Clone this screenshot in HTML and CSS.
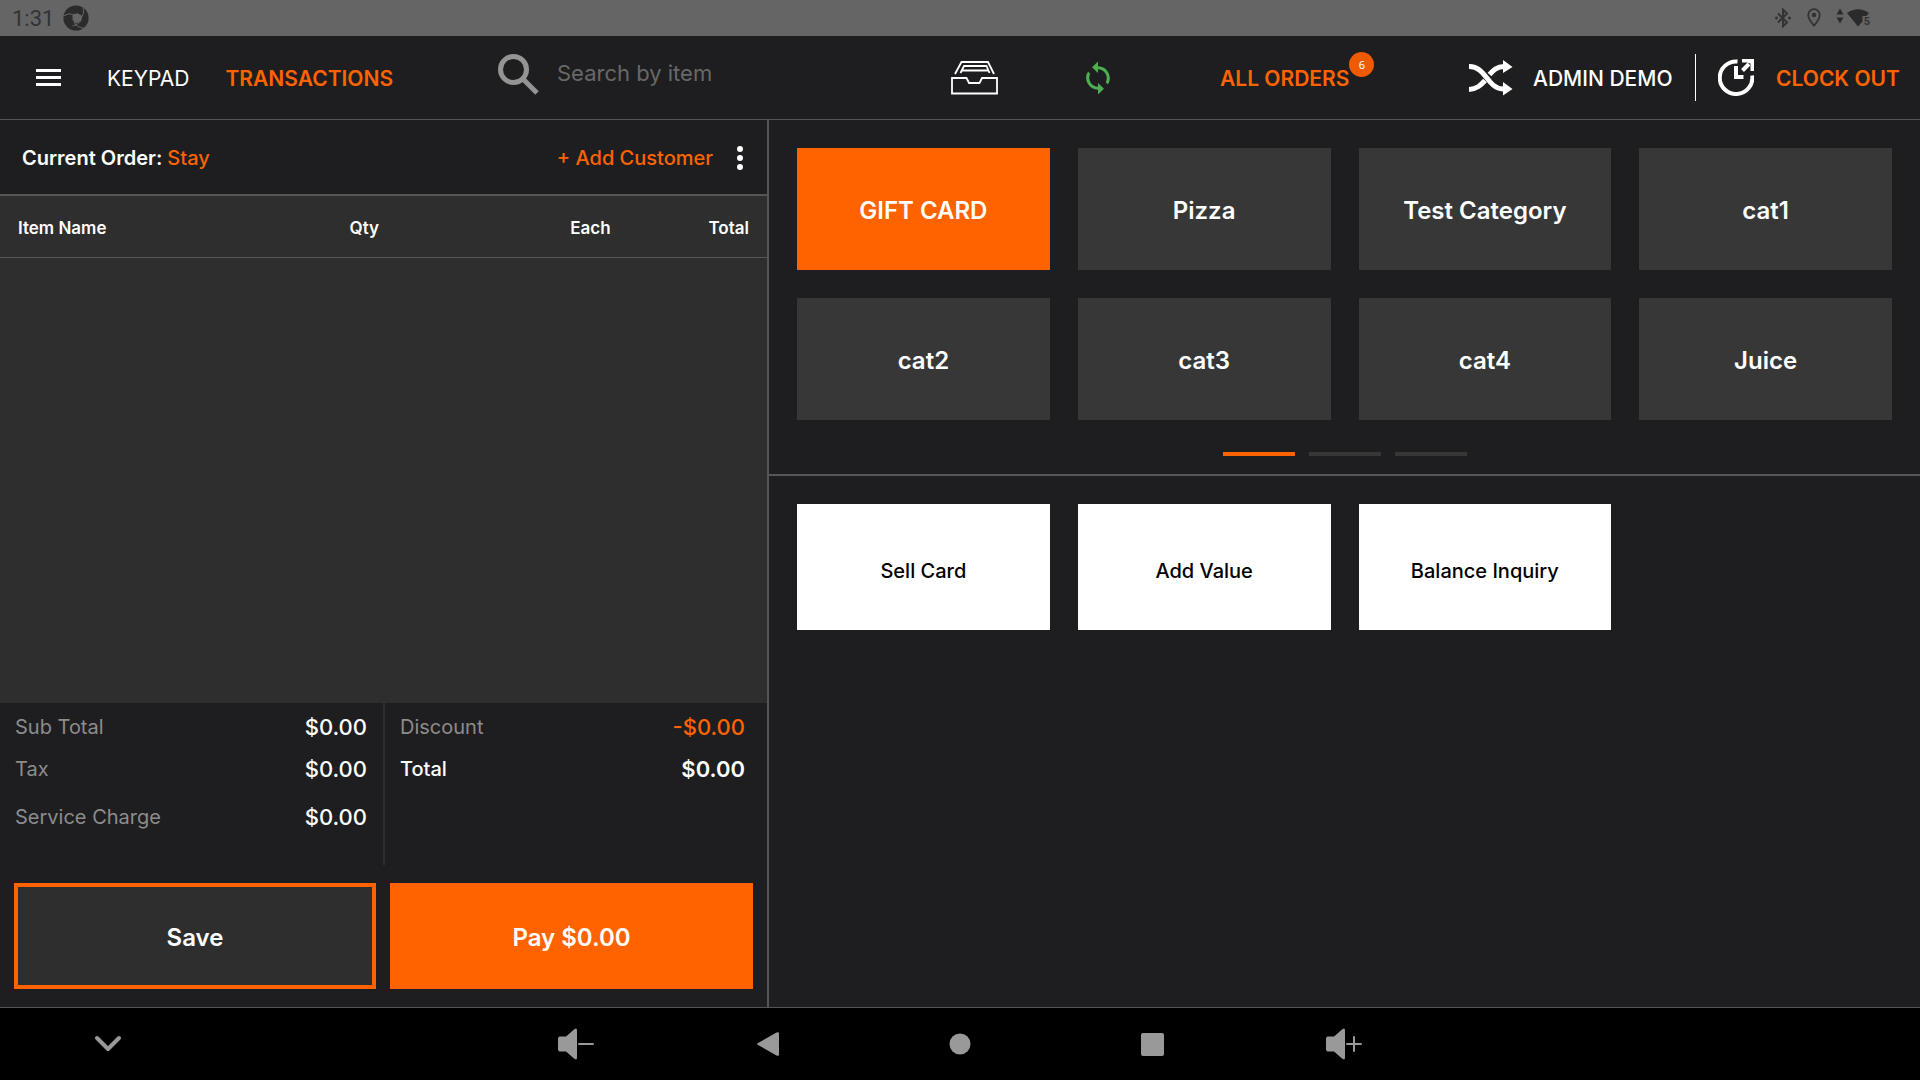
FILE: index.html
```html
<!DOCTYPE html>
<html lang="en">
<head>
<meta charset="utf-8">
<meta name="viewport" content="width=device-width, initial-scale=1">
<title>Register</title>
<link rel="stylesheet" href="styles.css">
</head>
<body>
<div class="status">
  <div class="status-group">
    <time class="clock">1:31</time>
    <svg class="app-mark" width="26" height="26" viewBox="0 0 26 26" aria-hidden="true">
      <circle cx="13" cy="13" r="12.600" fill="#2b2b2b"/>
      <path d="M9.500 9.500 14.500 8.300 19.500 11 18 16 13 18.500 9.500 15z" fill="#656565"/>
      <path d="M.5 11Q5 7.500 10.500 9.500M19 11.500Q22 7 20 2.500M18 15.500Q15.500 20 9.500 21M11 17Q12.500 22 22 23.500" fill="none" stroke="#656565" stroke-width="1"/>
    </svg>
  </div>
  <div class="status-group status-right">
    <svg width="18" height="20" viewBox="0 0 18 20" aria-label="Bluetooth">
      <path d="M4 5.500 13 14.500 9 18.300V1.700L13 5.500 4 14.500" fill="none" stroke="#333" stroke-width="2"/>
      <circle cx="2.500" cy="10" r="1.500" fill="#333"/><circle cx="15.500" cy="10" r="1.500" fill="#333"/>
    </svg>
    <svg width="14" height="20" viewBox="0 0 14 20" aria-label="Location">
      <path d="M7 1.200a5.800 5.800 0 0 0-5.800 5.800C1.200 11 7 17.700 7 17.700S12.800 11 12.800 7A5.800 5.800 0 0 0 7 1.200Z" fill="none" stroke="#333" stroke-width="1.800"/>
      <circle cx="7" cy="7" r="2.300" fill="#333"/>
    </svg>
    <div class="wifi">
      <svg width="34" height="20" viewBox="0 0 34 20" aria-label="Wi-Fi">
        <path d="M.5 6.500 4 .5l3.500 6zM.5 9.500h7L4 15.500zM11 5Q22 -2.500 33 5L30.500 8H26.500V13.500L22 18.500z" fill="#2b2b2b"/>
      </svg>
      <span class="wifi-band">5</span>
    </div>
  </div>
</div>

<header class="topbar">
  <nav class="main-nav">
    <button class="icon-btn" aria-label="Menu">
      <svg width="25" height="17" viewBox="0 0 25 17"><path d="M0 1.500h25M0 8.500h25M0 15.500h25" stroke="#fff" stroke-width="3"/></svg>
    </button>
    <a class="nav-link keypad" href="#">KEYPAD</a>
    <a class="nav-link accent strong" href="#">TRANSACTIONS</a>
  </nav>
  <label class="search">
    <svg width="42" height="42" viewBox="0 0 42 42" aria-hidden="true"><circle cx="15.500" cy="15.500" r="13" fill="none" stroke="#949494" stroke-width="5"/><path d="m25.500 25.500 13.500 13.500" stroke="#949494" stroke-width="5"/></svg>
    <input class="search-input" type="text" placeholder="Search by item" aria-label="Search by item">
  </label>
  <button class="icon-btn" aria-label="Cash drawer">
    <svg width="47" height="34" viewBox="0 0 47 34"><path d="M12 17H1V32.500H46V17H33M4 13 10.500 1H37L43 13M9.500 12 13 5H35.500L38.500 12M10.500 9.500H38M11.500 17H15.500L18 22H28.500L31 17H34" fill="none" stroke="#fff" stroke-width="1.800"/></svg>
  </button>
  <button class="icon-btn" aria-label="Sync">
    <svg width="24" height="34" viewBox="0 0 24 34"><path d="M12 .5v4.700A12 12 0 0 1 22 23.500l-2.200-2.300A9 9 0 0 0 12 8.200V12L6 6.200zM12 33.500v-4.700A12 12 0 0 1 2 10.500l2.200 2.300A9 9 0 0 0 12 25.800V22l6 5.800z" fill="#4caf50"/></svg>
  </button>
  <div class="orders">
    <a class="nav-link accent strong" href="#">ALL ORDERS<span class="badge">6</span></a>
  </div>
  <div class="user">
    <button class="icon-btn" aria-label="Switch user">
      <svg width="44" height="36" viewBox="0 0 44 36"><path d="M0 6.500C17 6 18 28.500 34 29" fill="none" stroke="#fff" stroke-width="5"/><path d="M0 29.500C8 29 12 25 16 20.500M20.500 14.500C24.500 10 28 6.500 35 6.500" fill="none" stroke="#fff" stroke-width="5"/><path d="M34 0 43.500 7 34 13zM34 22 43.500 29 34 35.500z" fill="#fff"/></svg>
    </button>
    <a class="nav-link medium" href="#">ADMIN DEMO</a>
  </div>
  <div class="clock-out">
    <svg width="36" height="37" viewBox="0 0 36 37" aria-hidden="true"><path d="M19.500 2.500A16.300 16.300 0 1 0 34.200 16.500" fill="none" stroke="#fff" stroke-width="4"/><path d="M18 7v11h7.500" fill="none" stroke="#fff" stroke-width="4"/><path d="M24.500 11.500 31 5" fill="none" stroke="#fff" stroke-width="4"/><path d="M24 0h12v12h-3.500V4.500L29 3.500h-5z" fill="#fff"/></svg>
    <a class="nav-link accent strong" href="#">CLOCK OUT</a>
  </div>
</header>

<main class="workspace">
  <section class="order">
    <div class="order-head">
      <h1 class="order-title">Current Order: <span class="accent">Stay</span></h1>
      <button class="add-customer">+ Add Customer</button>
      <button class="icon-btn" aria-label="More options">
        <svg width="6" height="24" viewBox="0 0 6 24"><circle cx="3" cy="3" r="3" fill="#fff"/><circle cx="3" cy="12" r="3" fill="#fff"/><circle cx="3" cy="21" r="3" fill="#fff"/></svg>
      </button>
    </div>
    <div class="items">
      <table class="item-table">
        <thead>
          <tr><th class="col-name">Item Name</th><th class="col-qty">Qty</th><th class="col-each">Each</th><th class="col-total">Total</th></tr>
        </thead>
      </table>
    </div>
    <div class="totals">
      <dl class="sums">
        <dt>Sub Total</dt><dd>$0.00</dd>
        <dt>Tax</dt><dd>$0.00</dd>
        <dt>Service Charge</dt><dd>$0.00</dd>
      </dl>
      <dl class="sums sums-right">
        <dt>Discount</dt><dd class="discount">-$0.00</dd>
        <dt class="grand">Total</dt><dd class="grand-value">$0.00</dd>
      </dl>
    </div>
    <div class="order-actions">
      <button class="action save">Save</button>
      <button class="action pay">Pay $0.00</button>
    </div>
  </section>

  <section class="catalog">
    <div class="categories">
      <div class="tiles">
        <button class="tile selected">GIFT CARD</button>
        <button class="tile">Pizza</button>
        <button class="tile">Test Category</button>
        <button class="tile">cat1</button>
        <button class="tile">cat2</button>
        <button class="tile">cat3</button>
        <button class="tile">cat4</button>
        <button class="tile">Juice</button>
      </div>
      <div class="pager">
        <button class="page current" aria-label="Page 1"></button>
        <button class="page" aria-label="Page 2"></button>
        <button class="page" aria-label="Page 3"></button>
      </div>
    </div>
    <div class="tiles products">
      <button class="product">Sell Card</button>
      <button class="product">Add Value</button>
      <button class="product">Balance Inquiry</button>
    </div>
  </section>
</main>

<footer class="system-nav">
  <button class="icon-btn hide-btn" aria-label="Hide">
    <svg width="28" height="18" viewBox="0 0 28 18"><path d="m3 3 11 11L25 3" fill="none" stroke="#999" stroke-width="4" stroke-linecap="round" stroke-linejoin="round"/></svg>
  </button>
  <button class="icon-btn" aria-label="Volume down">
    <svg width="36" height="32" viewBox="0 0 36 32"><path d="M2 8.500h6L16 1.500q3-2.500 3 1v27q0 3.500-3 1L8 23.500H2q-2 0-2-2v-11q0-2 2-2z" fill="#999"/><path d="M21 16h14" stroke="#999" stroke-width="2" stroke-linecap="round"/></svg>
  </button>
  <button class="icon-btn" aria-label="Back">
    <svg width="22" height="24" viewBox="0 0 22 24"><path d="M1 11 19.500.6Q22 -.5 22 1.500v21q0 2-2.500.9L1 13q-1.500-1 0-2z" fill="#999"/></svg>
  </button>
  <button class="icon-btn" aria-label="Home">
    <svg width="22" height="22" viewBox="0 0 22 22"><circle cx="11" cy="11" r="10.500" fill="#999"/></svg>
  </button>
  <button class="icon-btn" aria-label="Recent apps">
    <svg width="23" height="23" viewBox="0 0 23 23"><rect width="23" height="23" rx="2" fill="#999"/></svg>
  </button>
  <button class="icon-btn" aria-label="Volume up">
    <svg width="36" height="32" viewBox="0 0 36 32"><path d="M2 8.500h6L16 1.500q3-2.500 3 1v27q0 3.500-3 1L8 23.500H2q-2 0-2-2v-11q0-2 2-2z" fill="#999"/><path d="M21 16h14M28 9v14" stroke="#999" stroke-width="2" stroke-linecap="round"/></svg>
  </button>
</footer>
</body>
</html>
```
FILE: styles.css
```css
*, *::before, *::after { box-sizing: border-box; }

body {
  margin: 0;
  min-height: 100vh;
  display: flex;
  flex-direction: column;
  background: #1e1e20;
  color: #fff;
  font-family: Inter, "Liberation Sans", sans-serif;
  font-size: 20px;
  line-height: 28px;
}

button, input { font: inherit; color: inherit; }
button { border: 0; padding: 0; background: none; cursor: pointer; }
svg { display: block; flex: none; }
a { color: inherit; text-decoration: none; }

.accent { color: #ff6300; }
.medium { font-weight: 500; }
.strong { font-weight: 600; }
.icon-btn { display: flex; align-items: center; }

/* Device status bar */
.status {
  display: flex;
  justify-content: space-between;
  height: 36px;
  padding: 0 50px 0 12px;
  background: #656565;
  color: #333;
}
.status-group { display: flex; align-items: center; gap: 9px; }
.status-right { gap: 15px; }
.clock { font-family: Roboto, sans-serif; font-size: 22px; padding-top: 1px; }
.wifi { position: relative; width: 34px; }
.wifi-band {
  position: absolute;
  right: 0;
  bottom: 1px;
  padding-left: 1px;
  background: #656565;
  font-family: Roboto, sans-serif;
  font-size: 11px;
  font-weight: 700;
  line-height: 10px;
}

/* Top bar */
.topbar {
  display: grid;
  grid-template-columns: 498fr 453fr 135fr 134fr 249fr 249fr 202fr;
  align-items: center;
  height: 84px;
  border-bottom: 1px solid #555;
}
.main-nav { display: flex; align-items: center; gap: 36px; padding-left: 36px; }
.nav-link { padding-top: 2px; font-size: 21px; white-space: nowrap; }
.keypad { margin-left: 10px; }
.search { display: flex; align-items: center; gap: 17px; padding-bottom: 6px; }
.search-input {
  flex: 1;
  min-width: 0;
  padding: 0 0 4px;
  border: 0;
  outline: 0;
  background: none;
  font-size: 22px;
}
.search-input::placeholder { color: #686868; opacity: 1; }
.orders { display: flex; }
.orders .nav-link { position: relative; }
.badge {
  position: absolute;
  left: 100%;
  bottom: 16px;
  width: 25px;
  height: 25px;
  border-radius: 50%;
  background: #f05a00;
  color: #fff;
  font-family: "Noto Sans", sans-serif;
  font-size: 11px;
  font-weight: 400;
  line-height: 25px;
  text-align: center;
}
.user { display: flex; align-items: center; gap: 20px; }
.user::after { content: ""; width: 1px; height: 47px; margin: 0 22px 0 auto; background: #fff; }
.clock-out { display: flex; align-items: center; gap: 22px; }

/* Two panes */
.workspace { flex: 1; display: grid; grid-template-columns: 769fr 1151fr; }
.order { display: flex; flex-direction: column; border-right: 2px solid #555; }

.order-head {
  display: flex;
  align-items: center;
  height: 76px;
  padding: 2px 24px 0 22px;
  border-bottom: 2px solid #555;
}
.order-title { flex: 1; margin: 0; font-size: 20px; font-weight: 600; }
.order-title .accent { font-weight: 500; }
.add-customer { margin-right: 24px; color: #ff6300; font-weight: 500; }

.items { flex: 1; background: #2e2e2e; }
.item-table { width: 100%; table-layout: fixed; border-collapse: collapse; }
.item-table th {
  height: 61px;
  padding: 4px 0 0;
  border-bottom: 1px solid #555;
  font-size: 17px;
  font-weight: 600;
}
.item-table .col-name { width: 40%; padding-left: 18px; text-align: left; }
.item-table .col-qty { width: 15%; text-align: center; }
.item-table .col-each { width: 25%; padding-right: 3px; text-align: right; }
.item-table .col-total { width: 20%; padding-right: 18px; text-align: right; }

.totals { display: grid; grid-template-columns: 383fr 384fr; }
.sums {
  display: grid;
  grid-template-columns: 1fr auto;
  grid-template-rows: 48px 36px 60px;
  align-items: center;
  margin: 0;
  padding: 0 16px 18px 15px;
}
.sums dt { color: #8c8c8c; }
.sums dd { margin: 0; font-size: 22px; font-weight: 500; text-align: right; }
.sums-right { padding-right: 22px; border-left: 2px solid #2e2e2e; }
.sums .grand { color: #fff; font-weight: 500; }
.sums .grand-value { font-weight: 600; }
.sums .discount { color: #ff6300; }

.order-actions { display: grid; grid-template-columns: 362fr 363fr; gap: 14px; padding: 18px 14px; }
.action { height: 106px; padding-top: 3px; font-size: 24px; font-weight: 600; }
.save { border: 4px solid #ff6300; background: #2e2e2e; }
.pay { background: #ff6300; }

/* Catalog */
.categories { padding: 28px 0 18px; border-bottom: 2px solid #555; }
.tiles { display: grid; grid-template-columns: repeat(4, 1fr); gap: 28px; padding: 0 28px; }
.tile { height: 122px; padding-top: 4px; background: #373737; font-size: 24px; font-weight: 600; }
.tile.selected { background: #ff6300; }
.pager { display: flex; justify-content: center; gap: 14px; padding-top: 32px; }
.page { width: 72px; height: 4px; background: #373737; }
.page.current { background: #ff6300; }
.products { padding: 28px; }
.product { height: 126px; padding-top: 7px; background: #fff; color: #000; font-weight: 500; }

/* Device navigation bar */
.system-nav {
  display: grid;
  grid-template-columns: 480fr repeat(5, 192fr) 480fr;
  height: 73px;
  border-top: 1px solid #555;
  background: #000;
}
.system-nav .icon-btn { justify-content: center; }
.system-nav .hide-btn { justify-content: flex-start; padding-left: 94px; }
```
